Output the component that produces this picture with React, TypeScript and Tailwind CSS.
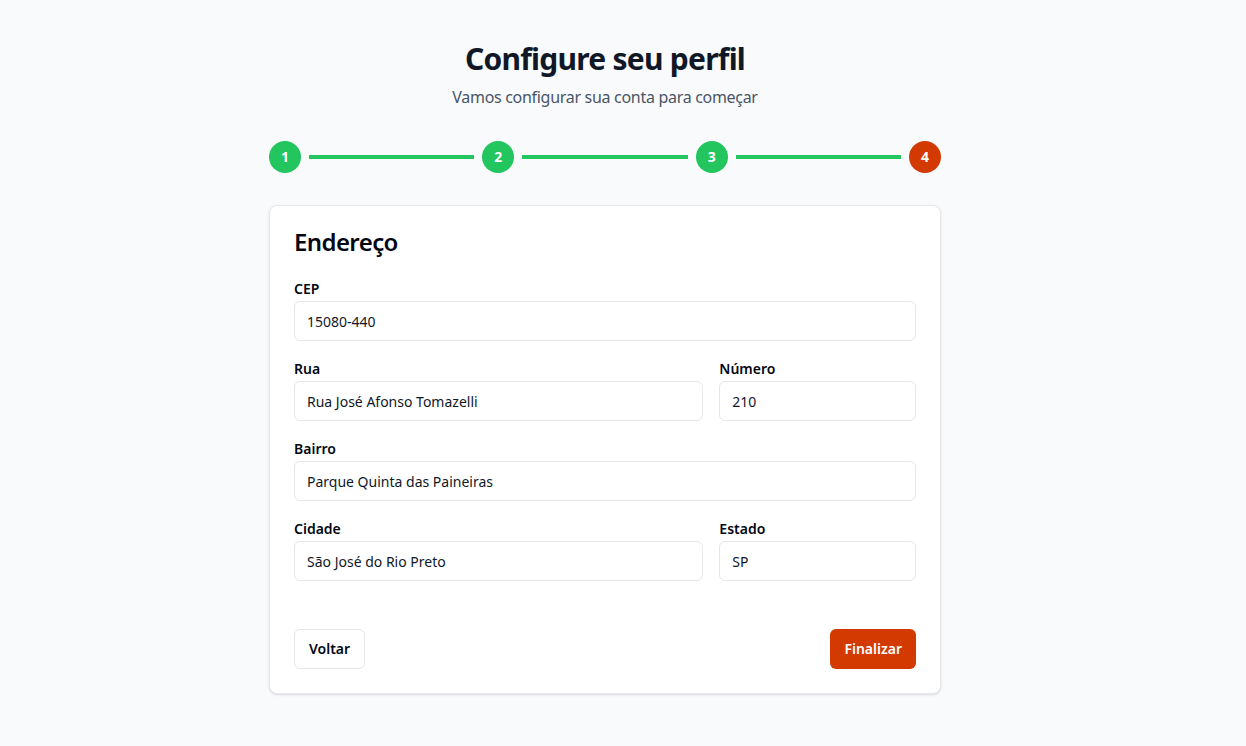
import { useState } from "react";

const steps = [1, 2, 3, 4];

function Field({
  label,
  value,
  className = "",
}: {
  label: string;
  value: string;
  className?: string;
}) {
  const [v, setV] = useState(value);
  return (
    <div className={"flex flex-col gap-0.5 " + className}>
      <label className="text-sm font-semibold leading-5 text-gray-950">{label}</label>
      <input
        className="h-10 w-full rounded-md border border-gray-200 bg-white px-3 text-sm text-gray-900 outline-none"
        value={v}
        onChange={(e) => setV(e.target.value)}
      />
    </div>
  );
}

export default function App() {
  return (
    <div
      className="min-h-screen bg-gray-50 pt-[41px] pb-10 pr-9 text-gray-900"
      style={{ fontFamily: '"Noto Sans", "Open Sans", sans-serif' }}
    >
      <div className="mx-auto w-[672px]">
        <div className="mb-8 text-center">
          <h1 className="text-3xl font-bold leading-9 tracking-tight text-gray-900">Configure seu perfil</h1>
          <p className="mt-2 text-base leading-6 tracking-[-0.3px] text-gray-600">
            Vamos configurar sua conta para começar
          </p>
        </div>

        {/* stepper */}
        <div className="mb-8 flex items-center">
          {steps.map((s, i) => (
            <div key={s} className={"flex items-center " + (i < steps.length - 1 ? "flex-1" : "")}>
              <div
                className={
                  "flex h-8 w-8 items-center justify-center rounded-full text-sm font-bold text-white " +
                  (s === 4 ? "bg-[#d23a02]" : "bg-[#22c55e]")
                }
              >
                {s}
              </div>
              {i < steps.length - 1 && <div className="mx-2 h-1 flex-1 bg-[#22c55e]" />}
            </div>
          ))}
        </div>

        <div className="rounded-lg border border-gray-200 bg-white p-6 shadow-sm">
          <h2 className="text-2xl font-semibold leading-none tracking-tight text-gray-950">Endereço</h2>

          <div className="mt-[25px] flex flex-col gap-[18px]">
            <Field label="CEP" value="15080-440" />
            <div className="grid grid-cols-3 gap-4">
              <Field label="Rua" value="Rua José Afonso Tomazelli" className="col-span-2" />
              <Field label="Número" value="210" />
            </div>
            <Field label="Bairro" value="Parque Quinta das Paineiras" />
            <div className="grid grid-cols-3 gap-4">
              <Field label="Cidade" value="São José do Rio Preto" className="col-span-2" />
              <Field label="Estado" value="SP" />
            </div>
          </div>

          <div className="mt-12 flex items-center justify-between">
            <button className="h-10 rounded-md border border-gray-200 bg-white px-[14px] text-sm font-semibold text-gray-950">
              Voltar
            </button>
            <button className="h-10 rounded-md bg-[#d23a02] px-[14px] text-sm font-semibold text-white">
              Finalizar
            </button>
          </div>
        </div>
      </div>
    </div>
  );
}
